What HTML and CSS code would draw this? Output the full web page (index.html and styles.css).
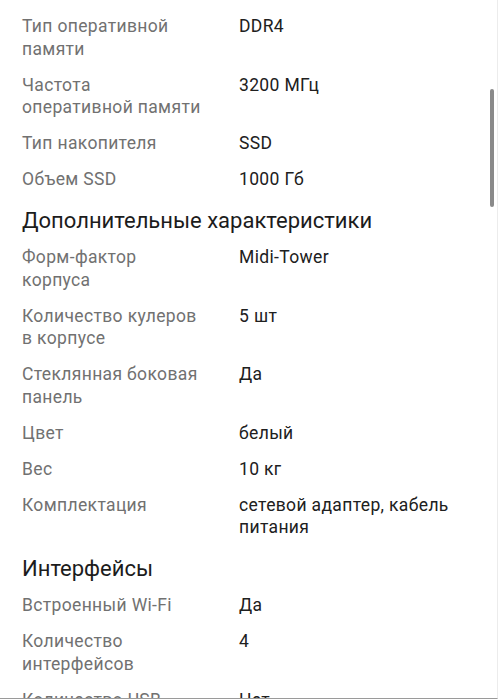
FILE: index.html
```html
<!DOCTYPE html>
<html lang="ru">
<head>
<meta charset="utf-8">
<title>Характеристики</title>
<link rel="stylesheet" href="styles.css">
</head>
<body>
<div class="screen">
  <div class="content">
    <div class="specs">
      <div class="label">Тип оперативной памяти</div><div class="value">DDR4</div>
      <div class="label">Частота оперативной памяти</div><div class="value">3200 МГц</div>
      <div class="label">Тип накопителя</div><div class="value">SSD</div>
      <div class="label">Объем SSD</div><div class="value">1000 Гб</div>
    </div>
    <h2 class="section-title">Дополнительные характеристики</h2>
    <div class="specs">
      <div class="label">Форм-фактор корпуса</div><div class="value">Midi-Tower</div>
      <div class="label">Количество кулеров в корпусе</div><div class="value">5 шт</div>
      <div class="label">Стеклянная боковая панель</div><div class="value">Да</div>
      <div class="label">Цвет</div><div class="value">белый</div>
      <div class="label">Вес</div><div class="value">10 кг</div>
      <div class="label">Комплектация</div><div class="value">сетевой адаптер, кабель питания</div>
    </div>
    <h2 class="section-title">Интерфейсы</h2>
    <div class="specs">
      <div class="label">Встроенный Wi-Fi</div><div class="value">Да</div>
      <div class="label">Количество интерфейсов</div><div class="value">4</div>
      <div class="label">Количество USB</div><div class="value">Нет</div>
    </div>
  </div>
  <div class="scrollbar"></div>
</div>
</body>
</html>
```

FILE: styles.css
```css
html, body {
  margin: 0;
  padding: 0;
  background: #ffffff;
}

body {
  font-family: Roboto, "Noto Sans", "Liberation Sans", sans-serif;
}

.screen {
  position: relative;
  width: 498px;
  height: 699px;
  box-sizing: border-box;
  overflow: hidden;
  border-right: 1px solid #ececec;
  border-bottom: 1px solid #9a9a9a;
}

.content {
  padding: 15.2px 30px 0 22px;
}

.specs {
  display: grid;
  grid-template-columns: 217px 1fr;
  row-gap: 13.5px;
  font-size: 17.5px;
  line-height: 22.5px;
  letter-spacing: 0.35px;
}

.label {
  color: #717171;
  padding-right: 33px;
}

.value {
  color: #202020;
}

.section-title {
  margin: 16.6px 0 11px;
  font-size: 22px;
  line-height: 28px;
  font-weight: 400;
  color: #1c1c1c;
}

.scrollbar {
  position: absolute;
  left: 490px;
  top: 89px;
  width: 4px;
  height: 118px;
  border-radius: 2px;
  background: #8a8a8a;
}
```
